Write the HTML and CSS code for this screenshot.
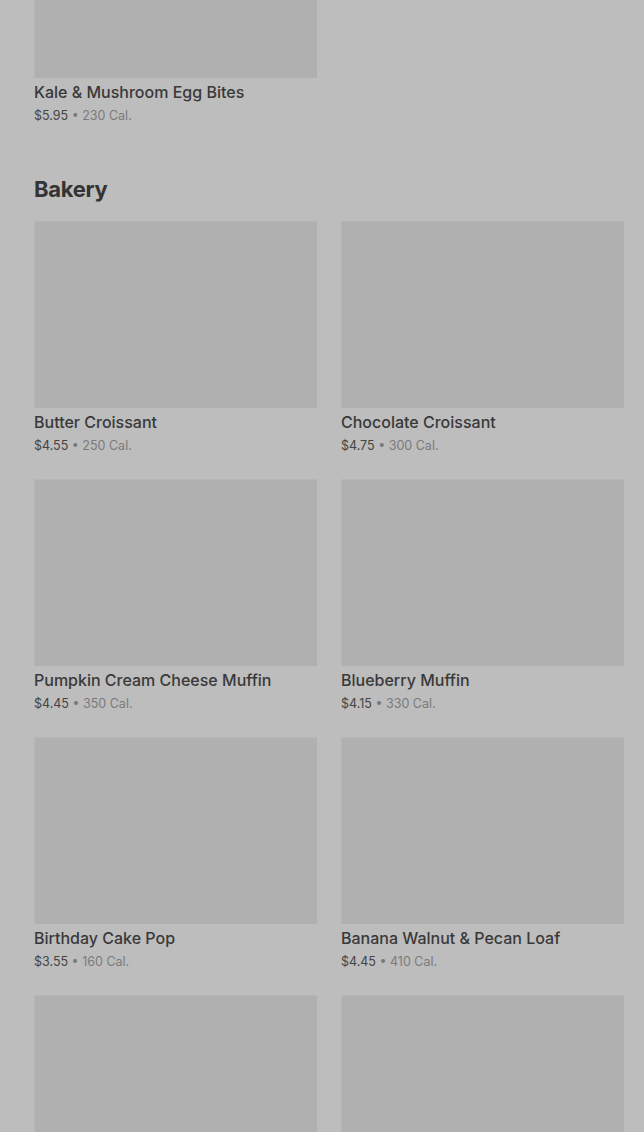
FILE: index.html
```html
<!DOCTYPE html>
<html>
  <head>
    <meta charset="utf-8">
    <meta name="viewport" content="width=device-width, initial-scale=1.0">
    <title>Menu</title>
    <link rel="stylesheet" href="styles.css">
  </head>
  <body>
    <main class="menu">
      <section class="menu-section">
        <div class="grid">
          <div class="item">
            <div class="thumb"></div>
            <div class="name">Kale &amp; Mushroom Egg Bites</div>
            <div class="meta"><span class="price">$5.95</span> • 230 Cal.</div>
          </div>
        </div>
      </section>

      <section class="menu-section">
        <h2>Bakery</h2>
        <div class="grid">
          <div class="item">
            <div class="thumb"></div>
            <div class="name">Butter Croissant</div>
            <div class="meta"><span class="price">$4.55</span> • 250 Cal.</div>
          </div>
          <div class="item">
            <div class="thumb"></div>
            <div class="name">Chocolate Croissant</div>
            <div class="meta"><span class="price">$4.75</span> • 300 Cal.</div>
          </div>
          <div class="item">
            <div class="thumb"></div>
            <div class="name">Pumpkin Cream Cheese Muffin</div>
            <div class="meta"><span class="price">$4.45</span> • 350 Cal.</div>
          </div>
          <div class="item">
            <div class="thumb"></div>
            <div class="name">Blueberry Muffin</div>
            <div class="meta"><span class="price">$4.15</span> • 330 Cal.</div>
          </div>
          <div class="item">
            <div class="thumb"></div>
            <div class="name">Birthday Cake Pop</div>
            <div class="meta"><span class="price">$3.55</span> • 160 Cal.</div>
          </div>
          <div class="item">
            <div class="thumb"></div>
            <div class="name">Banana Walnut &amp; Pecan Loaf</div>
            <div class="meta"><span class="price">$4.45</span> • 410 Cal.</div>
          </div>
          <div class="item">
            <div class="thumb"></div>
            <div class="name">&nbsp;</div>
            <div class="meta">&nbsp;</div>
          </div>
          <div class="item">
            <div class="thumb"></div>
            <div class="name">&nbsp;</div>
            <div class="meta">&nbsp;</div>
          </div>
        </div>
      </section>
    </main>
  </body>
</html>
```

FILE: styles.css
```css
* {
  box-sizing: border-box;
}

html,
body {
  margin: 0;
  padding: 0;
  background-color: #bdbdbd;
  overflow: hidden;
}

body {
  font-family: Inter, 'Open Sans', sans-serif;
  color: #363636;
}

/* page is scrolled: the first card's image is partly above the fold */
.menu {
  margin-top: -109px;
  padding: 0 20px 0 34px;
}

.menu-section + .menu-section {
  margin-top: 50px;
}

.menu-section h2 {
  margin: 0 0 18px;
  font-size: 22px;
  line-height: 28px;
  font-weight: 700;
  letter-spacing: -0.3px;
  color: #343434;
}

.grid {
  display: grid;
  grid-template-columns: 283px 283px;
  column-gap: 24px;
  row-gap: 24px;
}

.thumb {
  height: 187px;
  background-color: #b0b0b0;
  box-shadow: inset 1px 1px 0 rgba(255,255,255,.08);
}

.name {
  margin-top: 4px;
  font-size: 16px;
  line-height: 20px;
  font-weight: 500;
  color: #393939;
}

.meta {
  margin-top: 5px;
  font-size: 12.5px;
  line-height: 18px;
  color: #7a7a7a;
}

.price {
  color: #444;
}
```
